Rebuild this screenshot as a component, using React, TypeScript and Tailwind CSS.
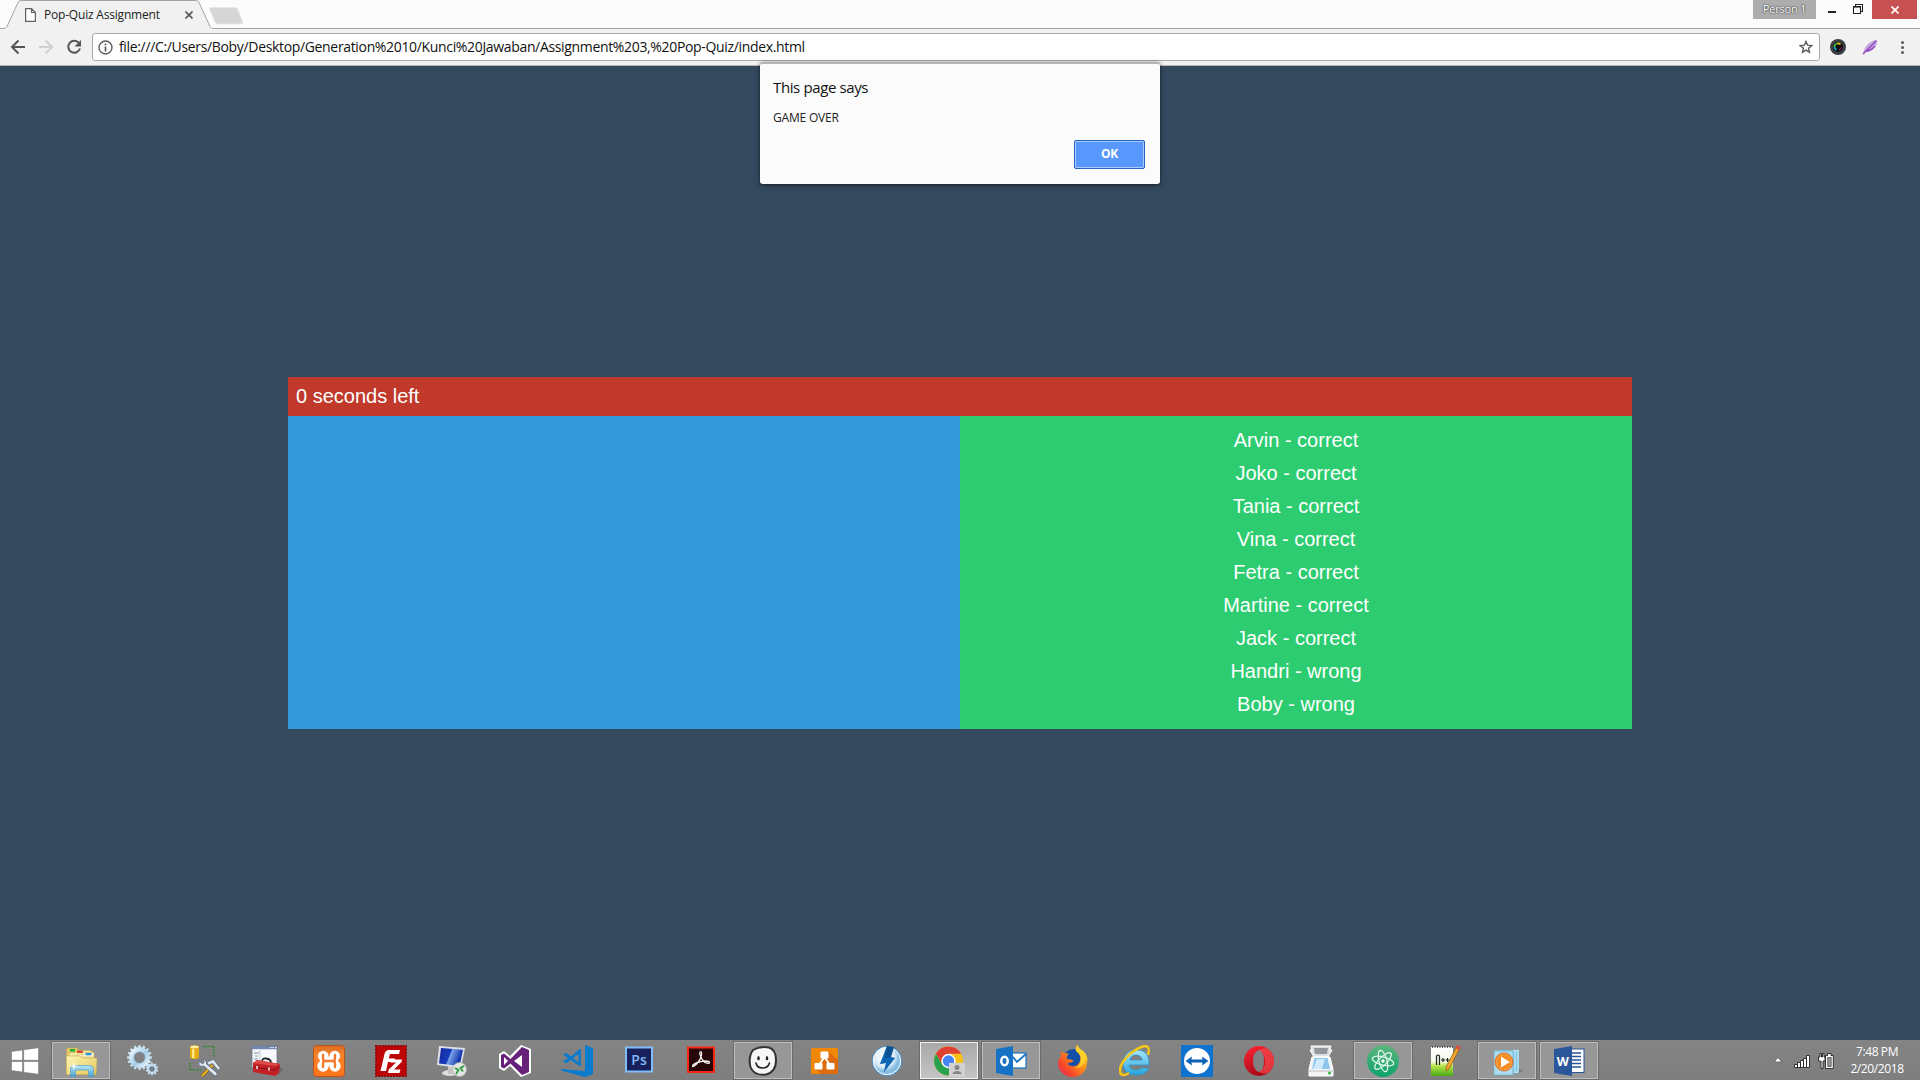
import React from "react";

type IconProps = { children: React.ReactNode };

const Icon = ({ children }: IconProps) => (
  <svg width="32" height="32" viewBox="0 0 32 32" className="shrink-0">
    {children}
  </svg>
);

const gearTeeth = (cx: number, cy: number, r: number, n: number, w: number, h: number, fill: string) =>
  Array.from({ length: n }, (_, i) => (
    <rect
      key={i}
      x={cx - w / 2}
      y={cy - r - h}
      width={w}
      height={h + 2}
      fill={fill}
      transform={`rotate(${(360 / n) * i} ${cx} ${cy})`}
    />
  ));

const Explorer = () => (
  <Icon>
    <defs>
      <linearGradient id="folder" x1="0" y1="0" x2="1" y2="1">
        <stop offset="0" stopColor="#fdf6b8" />
        <stop offset="1" stopColor="#e5c755" />
      </linearGradient>
      <linearGradient id="stand" x1="0" y1="0" x2="0" y2="1">
        <stop offset="0" stopColor="#b9e6f7" />
        <stop offset="1" stopColor="#4ba3d4" />
      </linearGradient>
    </defs>
    <path d="M1.500 29V5Q1.500 3 3.500 3H12L14 6H27V29Z" fill="#e6cb68" stroke="#c6a94c" strokeWidth=".6" />
    <rect x="5" y="4" width="5" height="2.500" fill="#18b43c" />
    <path d="M4 9V7.500H11L13 5.500H25L29 8V14H4Z" fill="#f5e9a3" stroke="#c6a94c" strokeWidth=".6" />
    <rect x="12" y="5.500" width="6" height="2.500" fill="#d94a28" />
    <path d="M12 10H18L20 7.500H29V12H12Z" fill="#fff7cf" stroke="#c6a94c" strokeWidth=".5" />
    <rect x="20.500" y="8" width="6" height="2.300" fill="#2f8fe0" />
    <path d="M1.500 11H15L17 13H32L31 29.500H1.500Z" fill="url(#folder)" stroke="#cdb04d" strokeWidth=".6" />
    <path d="M5.500 31.500V24Q5.500 20.500 9 20.500H25Q28.500 20.500 28.500 24V31.500H23.500V26Q23.500 25 22.500 25H11.500Q10.500 25 10.500 26V31.500Z" fill="url(#stand)" stroke="#4d9fc4" strokeWidth=".7" />
    <path d="M9 16L9.700 20.300L14 21L9.700 21.700L9 26L8.300 21.700L4 21L8.300 20.300Z" fill="#fff" />
  </Icon>
);

const Gears = () => (
  <Icon>
    <defs>
      <linearGradient id="gear" x1="0" y1="0" x2="1" y2="1">
        <stop offset="0" stopColor="#e9f6fe" />
        <stop offset=".55" stopColor="#a6cfe9" />
        <stop offset="1" stopColor="#e2f1fa" />
      </linearGradient>
    </defs>
    {gearTeeth(12.5, 12.5, 10, 16, 2.4, 2.4, "#c8e2f2")}
    <circle cx="12.500" cy="12.500" r="8" fill="none" stroke="url(#gear)" strokeWidth="5" />
    <circle cx="12.500" cy="12.500" r="5.500" fill="none" stroke="#6f9bb8" strokeWidth=".6" />
    {gearTeeth(25, 24, 4.6, 10, 1.8, 1.7, "#c8e2f2")}
    <circle cx="25" cy="24" r="3.700" fill="none" stroke="#c3dfef" strokeWidth="2.500" />
    <circle cx="25" cy="24" r="2.400" fill="none" stroke="#51758f" strokeWidth=".7" />
  </Icon>
);

const DbTools = () => (
  <Icon>
    <path d="M14 1.500H25V12M1 18V25H12" fill="none" stroke="#1d8a20" strokeWidth="1.400" strokeDasharray="1.400 1.400" />
    <path d="M1 2V12Q1 14 5.500 14Q10 14 10 12V2Z" fill="#e6ab15" />
    <path d="M3 3V13H5.500V3Z" fill="#ffe783" />
    <ellipse cx="5.500" cy="2" rx="4.500" ry="1.800" fill="#fff0a1" stroke="#c58a0b" strokeWidth=".5" />
    <path d="M13 31L23.500 20" stroke="#6b4b00" strokeWidth="3.200" />
    <path d="M13 31L23.500 20" stroke="#f0b323" strokeWidth="2.200" />
    <path d="M19 18.500L24 16.500L30 24" stroke="#5f6f7f" strokeWidth="4" fill="none" />
    <path d="M19 18.500L24 16.500L30 24" stroke="#d9e5ef" strokeWidth="2.700" fill="none" />
    <path d="M10 16Q9 20 12 21.500L15 21L26 31Q29 31 28 28L17.500 19Q18 15 14 14L15.500 17L13.500 19Z" fill="#e3ecf4" stroke="#53677b" strokeWidth=".8" />
  </Icon>
);

const Toolbox = () => (
  <Icon>
    <rect x="1" y="1" width="25" height="22" fill="#f6f8fb" stroke="#697994" strokeWidth=".8" />
    <rect x="1" y="1" width="25" height="3.200" fill="#7186ad" />
    <path d="M19 2.600h1.500M21.500 2.600h1.500M24 2.600h1.500" stroke="#fff" strokeWidth="1" />
    <path d="M3 8h5M4 11h3M3 14h4" stroke="#8292a8" strokeWidth="1" />
    <path d="M9 5V15" stroke="#bac5d3" />
    <path d="M24 18L32 24L29 29L24 30Z" fill="#555" opacity=".4" />
    <path d="M11 17Q11 13 15 13.500Q20 14 20 18" fill="none" stroke="#222" strokeWidth="1.800" />
    <path d="M2 18L6 15L29 19L28 28L24 31L2 27Z" fill="#c32125" />
    <path d="M2 18L6 15L29 19L24 21Z" fill="#dd4a4a" />
    <path d="M2 22L24 25L28.500 22" fill="none" stroke="#7f0d12" />
    <path d="M6 21V24M18 22.500V25.500" stroke="#eee" strokeWidth="1.500" />
  </Icon>
);

const Xampp = () => (
  <Icon>
    <defs>
      <linearGradient id="xampp" x1="0" y1="0" x2="0" y2="1">
        <stop stopColor="#d96b24" />
        <stop offset=".3" stopColor="#f6842d" />
        <stop offset="1" stopColor="#ff721a" />
      </linearGradient>
    </defs>
    <rect x=".5" y=".5" width="31" height="31" rx="3" fill="url(#xampp)" stroke="#b9541a" />
    <g fill="#fff">
      <circle cx="10.200" cy="11" r="5.300" />
      <circle cx="21.800" cy="11" r="5.300" />
      <circle cx="10" cy="21" r="5.700" />
      <circle cx="22" cy="21" r="5.700" />
      <rect x="7" y="11.500" width="18" height="9.500" />
    </g>
    <path d="M10 10V13.500Q10 16 12.500 16H19.500Q22 16 22 13.500V10M10 22V18.500Q10 16 12.500 16M22 22V18.500Q22 16 19.500 16" fill="none" stroke="#f5792a" strokeWidth="2.400" strokeLinecap="round" />
  </Icon>
);

const FileZilla = () => (
  <Icon>
    <rect x=".8" y=".8" width="30.400" height="30.400" fill="#bd0606" stroke="#8e0505" strokeWidth="1.500" strokeDasharray="2 1" />
    <path d="M5.500 26L9.500 9Q10.500 5 14 5H25L24 9H15L13.800 13.500H20L19.500 17H13L11 26Z" fill="#fff" />
    <path d="M16 14.500H27L26.500 17L19 24.500H25.500L24.500 28H13L13.700 24.500L21 17.500H15.500Z" fill="#fff" />
  </Icon>
);

const RemoteDesktop = () => (
  <Icon>
    <defs>
      <linearGradient id="screen" x1="0" y1="0" x2="1" y2=".3">
        <stop stopColor="#17269d" />
        <stop offset=".5" stopColor="#163cbb" />
        <stop offset=".55" stopColor="#7ba3ea" />
        <stop offset="1" stopColor="#082aa8" />
      </linearGradient>
    </defs>
    <ellipse cx="13" cy="28" rx="8" ry="3" fill="#dedede" />
    <path d="M11 21H18L20 29H11Z" fill="#c4c4c4" />
    <path d="M2 1L28 3L24 23L0 20Z" fill="#dce2e8" />
    <path d="M4 3L26 4.800L22.500 21L2 18.500Z" fill="url(#screen)" />
    <circle cx="22.500" cy="24.500" r="7" fill="#e3e6e3" stroke="#a9aea9" strokeWidth=".8" />
    <path d="M18 23L21.500 25L19 29M27 21L23.500 23L26 26.500" fill="none" stroke="#309a3c" strokeWidth="1.800" />
  </Icon>
);

const VisualStudio = () => (
  <Icon>
    <path d="M0 9L5 6L11 11L22 0L32 4V28L22 32L11 21L5 26L0 23Z" fill="#fff" />
    <path d="M2 10L5 8.500L11.500 14L23 2L30 5V27L23 30L11.500 18.500L5 23.500L2 22Z" fill="#68217a" />
    <path d="M5 12L9 16L5 20ZM15 16L23 10V22Z" fill="#fff" />
  </Icon>
);

const VsCode = () => (
  <Icon>
    <path d="M24 0L32 3V29L24 32L0 25.500V24L24 26Z" fill="#0b7ccd" />
    <path d="M2 9.500L5.500 8L10 11.500L18.500 4H20V21H18.500L9.500 15L5.500 18.500L2 16.500L5.500 13Z" fill="#0b7ccd" />
    <path d="M4.500 10.800V15.200L6.800 13ZM12 13.200L17.500 9V17.200Z" fill="#828282" />
  </Icon>
);

const Photoshop = () => (
  <Icon>
    <rect x="2" y="1.500" width="28" height="26" fill="#80bdfb" />
    <rect x="4" y="3.500" width="24" height="22" fill="#18205b" />
    <text x="16" y="19.500" textAnchor="middle" fontSize="14" fontWeight="600" fill="#7fb8f4" fontFamily="Open Sans">Ps</text>
  </Icon>
);

const Acrobat = () => (
  <Icon>
    <rect x="2" y="1.500" width="28" height="26.500" fill="#fb2610" />
    <rect x="4" y="3.500" width="24" height="22.500" fill="#270707" />
    <path d="M15 7Q17 6 16.500 10Q15 17 8.500 21.500Q7 22 8 20Q11 17 20 16Q25 16 24.500 17.800Q21 19.500 17.500 15Q14 9 15 7Z" fill="none" stroke="#f4eeee" strokeWidth="1.300" />
  </Icon>
);

const Balsamiq = () => (
  <Icon>
    <path d="M6 5Q13 1 22 2.500Q29 5 29 15Q29 27 19 29.500Q7 31 3.500 22Q1 12 6 5Z" fill="#f7f7f7" stroke="#333" strokeWidth="2" />
    <path d="M11.500 12.500V14M20 12.500V14" stroke="#222" strokeWidth="2.400" strokeLinecap="round" />
    <path d="M9 18Q10 23 15.500 23Q21 23 22.500 18" fill="none" stroke="#222" strokeWidth="1.600" strokeLinecap="round" />
  </Icon>
);

const DrawIo = () => (
  <Icon>
    <rect x="2" y="3" width="27" height="26" rx="1.500" fill="#f08705" />
    <path d="M19 6L29 15V29H12L6 24Z" fill="#df6c0c" />
    <path d="M15.500 12L10 20M15.500 12L21 20" stroke="#fff" strokeWidth="2" />
    <rect x="11.500" y="6.500" width="8" height="7" rx="1" fill="#fff" />
    <rect x="5.500" y="18" width="8" height="6.500" rx="1" fill="#fff" />
    <rect x="17.500" y="18" width="8" height="6.500" rx="1" fill="#fff" />
  </Icon>
);

const Daemon = () => (
  <Icon>
    <defs>
      <radialGradient id="daemon" cx=".4" cy=".35">
        <stop stopColor="#fff" />
        <stop offset=".7" stopColor="#dcecf7" />
        <stop offset="1" stopColor="#86bce2" />
      </radialGradient>
    </defs>
    <circle cx="16" cy="16" r="14.700" fill="url(#daemon)" stroke="#3d86c2" strokeWidth="1" />
    <circle cx="16" cy="16" r="13.700" fill="none" stroke="#fff" strokeWidth="1" />
    <path d="M16 1L23 2L20 12L24 13L13 27L15 18L9 19Z" fill="#0b4f93" />
    <path d="M16 1L14 13L20 12L24 13L13 27L15 18L9 19Z" fill="#1285da" opacity=".45" />
  </Icon>
);

const Chrome = () => (
  <Icon>
    <circle cx="15.500" cy="16" r="14.500" fill="#fbc116" />
    <path d="M2.900 8.800A14.500 14.500 0 0 1 28.100 8.800L15.500 8.800L9.300 19.600Z" fill="#e04132" />
    <path d="M2.900 8.800A14.500 14.500 0 0 0 15.500 30.500L21.700 19.600L9.300 19.600Z" fill="#2aa14f" />
    <circle cx="15.500" cy="16" r="7.200" fill="#fff" />
    <circle cx="15.500" cy="16" r="5.700" fill="#4485f4" />
    <rect x="16" y="18" width="16" height="14" fill="#d0d0d0" />
    <circle cx="24" cy="22.500" r="2.500" fill="#868686" />
    <path d="M19.500 29Q20 26 24 26Q28 26 28.500 29Z" fill="#868686" />
  </Icon>
);

const Outlook = () => (
  <Icon>
    <rect x="16" y="8" width="15" height="15" fill="#fff" stroke="#1672c5" strokeWidth="1.200" />
    <path d="M18 12L22 17L31 9" fill="none" stroke="#1672c5" strokeWidth="1.800" />
    <path d="M1 4L18 1V31L1 28Z" fill="#1672c5" />
    <ellipse cx="9.500" cy="16" rx="3.200" ry="4.300" fill="none" stroke="#fff" strokeWidth="2.500" />
  </Icon>
);

const Firefox = () => (
  <Icon>
    <defs>
      <linearGradient id="fox" x1="1" y1="0" x2="0" y2="1">
        <stop stopColor="#ffef32" />
        <stop offset=".4" stopColor="#ff9818" />
        <stop offset=".75" stopColor="#f4422d" />
        <stop offset="1" stopColor="#e72870" />
      </linearGradient>
    </defs>
    <circle cx="17" cy="15" r="11" fill="#1550a8" />
    <path d="M4 6Q3 8 4 11Q1 14 1 18A14.500 14 0 0 0 30 18Q32 11 26 6Q22 4 20 0Q18 3 19 6Q25 10 23 16Q21 22 15 21Q11 21 11 18Q14 18 17 16Q14 14 10 14Q9 11 12 9Q9 8 7 8Q5 8 4 6Z" fill="url(#fox)" />
    <path d="M20 0Q18 3 19 6Q24 9 24 15Q23 22 17 23Q26 24 29 14Q29 8 26 6Q22 4 20 0Z" fill="#ffd62b" opacity=".85" />
  </Icon>
);

const InternetExplorer = () => (
  <Icon>
    <defs>
      <linearGradient id="ie" x1="0" y1="0" x2="0" y2="1">
        <stop stopColor="#a5e7fc" />
        <stop offset="1" stopColor="#26a4de" />
      </linearGradient>
    </defs>
    <path d="M10 20H30Q31 5 18 5Q5 5 4 18Q4 30 18 30Q27 30 30 23H22Q20 25 17 25Q11 25 10 20ZM11 15Q12 10 17 10Q22 10 23 15Z" fill="url(#ie)" stroke="#268fc6" strokeWidth=".7" fillRule="evenodd" />
    <path d="M29 10Q31 3 28 1.500Q23-.5 11 9Q-1 20 1.500 28Q3 32 10 28" fill="none" stroke="#f3c51b" strokeWidth="2.500" />
  </Icon>
);

const TeamViewer = () => (
  <Icon>
    <rect width="32" height="32" fill="#0d73cf" />
    <circle cx="16" cy="16" r="13" fill="#fff" />
    <path d="M4.500 16L11 11.500L10.500 14.500H21.500L21 11.500L27.500 16L21 20.500L21.500 17.500H10.500L11 20.500Z" fill="#0d63b5" />
  </Icon>
);

const Opera = () => (
  <Icon>
    <defs>
      <linearGradient id="opera" x1="0" y1="0" x2=".4" y2="1">
        <stop stopColor="#ff2634" />
        <stop offset="1" stopColor="#aa0816" />
      </linearGradient>
    </defs>
    <path d="M16 1A15 15 0 1 0 16 31A15 15 0 1 0 16 1ZM16 5Q21 6 21 16Q21 26 16 27Q10 25 10 16Q10 7 16 5Z" fill="url(#opera)" fillRule="evenodd" />
    <path d="M16 5Q21 2 25 4Q31 9 31 16Q31 23 25 28Q21 30 16 27Q22 24 22 16Q22 8 16 5Z" fill="#fb4e52" opacity=".65" />
  </Icon>
);

const Scanner = () => (
  <Icon>
    <path d="M6 1H26L25 5H27L23 12H9L5 5H7Z" fill="#dde0e3" stroke="#fff" />
    <path d="M9 3H23L22 9H10Z" fill="#90969c" />
    <path d="M7 12H25L28 24V31H4V24Z" fill="#f2f4f5" stroke="#fff" />
    <path d="M9.500 13H22.500L25 24H7Z" fill="#8cc6ef" />
    <path d="M12 14H20L17 24H8Z" fill="#cfe9fa" />
    <path d="M4 26H28" stroke="#b9c0c6" />
    <circle cx="24.500" cy="28" r="1.500" fill="#39b44a" />
  </Icon>
);

const Atom = () => (
  <Icon>
    <defs>
      <linearGradient id="atom" x1="0" y1="0" x2="0" y2="1">
        <stop stopColor="#5fb57d" />
        <stop offset="1" stopColor="#0ba36c" />
      </linearGradient>
    </defs>
    <circle cx="16" cy="16" r="16" fill="url(#atom)" />
    <g fill="none" stroke="#e5f9ee" strokeWidth="1.200">
      <ellipse cx="16" cy="16" rx="11" ry="4" transform="rotate(15 16 16)" />
      <ellipse cx="16" cy="16" rx="11" ry="4" transform="rotate(75 16 16)" />
      <ellipse cx="16" cy="16" rx="11" ry="4" transform="rotate(135 16 16)" />
    </g>
    <circle cx="16" cy="16" r="1.700" fill="#fff" />
  </Icon>
);

const Notepad = () => (
  <Icon>
    <defs>
      <linearGradient id="note" x1="0" y1="0" x2="0" y2="1">
        <stop stopColor="#fff" />
        <stop offset=".5" stopColor="#f4fbe9" />
        <stop offset=".65" stopColor="#b5e64a" />
        <stop offset="1" stopColor="#4ba814" />
      </linearGradient>
    </defs>
    <rect x="2" y="2" width="22" height="29" fill="url(#note)" />
    <path d="M3 2H24" stroke="#555" strokeWidth="2" strokeDasharray="1 1.500" />
    <path d="M7.500 20V11Q7.500 10 9 10Q10.500 10 10.500 11V20M12 15H16M14 13V17M16.500 15H20.500M18.500 13V17" fill="none" stroke="#222" strokeWidth="1.200" />
    <path d="M28 1L31 3L20 24L17 26L17 22Z" fill="#efa42c" stroke="#875617" strokeWidth=".7" />
    <path d="M28 0L31.500 2L30 5L26.500 3Z" fill="#dd4e45" />
  </Icon>
);

const MediaPlayer = () => (
  <Icon>
    <path d="M24 29L32 26L28 24Z" fill="#555" opacity=".5" />
    <path d="M4 5H28V28L4 30Z" fill="#7fc6e4" />
    <path d="M25 6L27 5V27L25 28M22 6L24 5V28" fill="none" stroke="#d3f0fa" strokeWidth="1" />
    <rect x="3" y="6" width="19" height="24" fill="#abdcf0" stroke="#67aac7" strokeWidth=".6" />
    <circle cx="13" cy="17" r="9" fill="#f68a1d" stroke="#dd6514" strokeWidth=".8" />
    <circle cx="13" cy="17" r="7.500" fill="none" stroke="#f9b36d" strokeWidth=".7" />
    <path d="M10 11.500V22.500L19 17Z" fill="#fff" />
  </Icon>
);

const Word = () => (
  <Icon>
    <rect x="16" y="4" width="15" height="23.500" fill="#fff" stroke="#2a569a" strokeWidth="1" />
    <path d="M18 8H28M18 11.500H28M18 15H28M18 18.500H28M18 22H28" stroke="#2a569a" strokeWidth="1.500" />
    <path d="M1 4L19 1V31L1 28Z" fill="#2a569a" />
    <text x="9.700" y="20.500" textAnchor="middle" fontSize="12.500" fontWeight="700" fill="#fff" fontFamily="Open Sans">W</text>
  </Icon>
);

const apps: { name: string; icon: React.FC; state?: "open" | "active" }[] = [
  { name: "Explorer", icon: Explorer, state: "open" },
  { name: "Services", icon: Gears },
  { name: "Database tools", icon: DbTools },
  { name: "Toolbox", icon: Toolbox },
  { name: "XAMPP", icon: Xampp },
  { name: "FileZilla", icon: FileZilla },
  { name: "Remote Desktop", icon: RemoteDesktop },
  { name: "Visual Studio", icon: VisualStudio },
  { name: "VS Code", icon: VsCode },
  { name: "Photoshop", icon: Photoshop },
  { name: "Acrobat", icon: Acrobat },
  { name: "Balsamiq", icon: Balsamiq, state: "open" },
  { name: "draw.io", icon: DrawIo },
  { name: "Daemon Tools", icon: Daemon },
  { name: "Chrome", icon: Chrome, state: "active" },
  { name: "Outlook", icon: Outlook, state: "open" },
  { name: "Firefox", icon: Firefox },
  { name: "Internet Explorer", icon: InternetExplorer },
  { name: "TeamViewer", icon: TeamViewer },
  { name: "Opera", icon: Opera },
  { name: "Scanner", icon: Scanner },
  { name: "Atom", icon: Atom, state: "open" },
  { name: "Notepad++", icon: Notepad },
  { name: "Media Player", icon: MediaPlayer, state: "open" },
  { name: "Word", icon: Word, state: "open" },
];

const slotStyle = {
  none: "border-transparent",
  open: "border-[#bdbdbd] bg-[#979797] outline outline-1 outline-[#6b6b6b]",
  active: "border-[#f4f4f4] bg-gradient-to-b from-[#a9a9a9] to-[#c4c4c4] outline outline-1 outline-[#6b6b6b]",
};

const Taskbar = () => (
  <footer className="flex h-10 bg-gradient-to-b from-[#848484] to-[#7e7e7e]">
    <div className="flex w-[50px] items-center justify-center pt-px">
      <svg width="28" height="28" viewBox="0 0 28 28" fill="#fff" stroke="#6d6d6d" strokeWidth=".5">
        <path d="M.5 4.500L11.500 3V13.300H.5ZM12.700 2.800L27.500.7V13.300H12.700ZM.5 14.500H11.500V25L.5 23.500ZM12.700 14.500H27.500V27.300L12.700 25.200Z" />
      </svg>
    </div>
    {apps.map(({ name, icon: AppIcon, state }) => (
      <div key={name} className="flex w-[62px] justify-center pt-[2px] pb-px">
        <div className={`flex h-[37px] w-[58px] items-center justify-center border ${slotStyle[state ?? "none"]}`}>
          <AppIcon />
        </div>
      </div>
    ))}
    <div className="ml-auto flex items-center">
      <svg width="60" height="20" viewBox="0 0 60 20" className="mr-[16px]">
        <path d="M0 12L4 7.500L8 12Z" fill="#fff" stroke="#555" strokeWidth=".8" />
        <g fill="#fff" stroke="#222" strokeWidth=".9">
          <path d="M20.500 14.500h3v3h-3ZM23.500 12.500h3v5h-3ZM26.500 10.500h3v7h-3ZM29.500 8.500h3v9h-3ZM32.500 5.500h3v12h-3Z" />
          <path d="M46 3.500V7H44.500V11H47V18.500H49V11H51V7H50V3.500H48.500V7H47.500V3.500Z" />
          <path d="M53.500 3.500H57V5.500H59.300V18.500H51.500V5.500H53.500Z" />
        </g>
        <path d="M53.700 7.500h3.500v9h-3.500Z" fill="#999" stroke="#222" strokeWidth=".6" />
      </svg>
      <div className="mr-4 w-[54px] text-center text-[12px] leading-[17px] tracking-[-0.4px] whitespace-nowrap text-white">
        <div>7:48 PM</div>
        <div>2/20/2018</div>
      </div>
    </div>
  </footer>
);

const TabStrip = () => (
  <div className="relative flex h-[29px] bg-[#fcfcfc]">
    <svg width="1920" height="29" viewBox="0 0 1920 29" className="absolute inset-0">
      <path d="M0 28.500H4Q6 28.500 7 26.500L18 2.500Q19 .5 21 .5H196Q198 .5 199 2.500L210 26.500Q211 28.500 213 28.500H1920V30H0Z" fill="#f1f1f1" stroke="#a3a3a3" />
      <path d="M5 29H212" stroke="#f1f1f1" strokeWidth="1.500" />
      <path d="M211 7.500H235Q237 7.500 238 9.500L242.500 22Q243 24 241 24H218Q216 24 215 22L209.500 9Q209 7.500 211 7.500Z" fill="#d6d6d6" stroke="#e6e6e6" strokeWidth=".8" />
    </svg>
    <div className="relative flex h-[29px] w-[211px] items-center pl-[25px]">
      <svg width="11" height="14" viewBox="0 0 11 14" fill="#fff" stroke="#606060" className="shrink-0">
        <path d="M.6.6H6.500L10.400 4.500V13.400H.6ZM6.500.6V4.500H10.400" strokeWidth="1.200" />
      </svg>
      <span className="ml-2 text-[12px] tracking-[-0.2px] whitespace-nowrap text-[#222]">Pop-Quiz Assignment</span>
      <svg width="8" height="8" viewBox="0 0 8 8" className="absolute top-[11px] left-[185px]">
        <path d="M.5.5L7.500 7.500M7.500.5L.5 7.500" stroke="#5a5a5a" strokeWidth="1.700" />
      </svg>
    </div>
    <div className="relative ml-auto flex h-[19px] pr-[3px]">
      <div className="flex w-[63px] items-center justify-center bg-[#adadad] text-[11px] tracking-[-0.2px] whitespace-nowrap text-white [text-shadow:0_0_2px_#333,0_0_1px_#333]">
        Person 1
      </div>
      <svg width="56" height="19" viewBox="0 0 56 19">
        <path d="M12 12H20" stroke="#222" strokeWidth="2" />
        <path d="M39.500 6.500V4.500H46.500V11.500H44.500M37.500 6.500H44.500V13.500H37.500Z" fill="none" stroke="#222" strokeWidth="1.100" />
        <path d="M37 6.800H45" stroke="#222" strokeWidth="1.600" />
      </svg>
      <div className="flex w-[45px] items-center justify-center bg-[#c75050]">
        <svg width="8" height="8" viewBox="0 0 8 8" className="mt-px">
          <path d="M.5.5L7.500 7.500M7.500.5L.5 7.500" stroke="#fff" strokeWidth="1.600" />
        </svg>
      </div>
    </div>
  </div>
);

const Toolbar = () => (
  <div className="flex h-[37px] items-start border-b border-[#b5b5b5] bg-[#f1f1f1] pt-1">
    <svg width="92" height="28" viewBox="0 0 92 28" fill="none" strokeWidth="2">
      <path d="M25 14H12.500M18.500 7.500L12 14L18.500 20.500" stroke="#555" />
      <path d="M39 14H51.500M45.500 7.500L52 14L45.500 20.500" stroke="#d0d0d0" />
      <path d="M79 10A6 6 0 1 0 80 15.500" stroke="#555" />
      <path d="M81 7V13.500H74.500Z" fill="#555" />
    </svg>
    <div className="flex h-7 w-[1728px] items-center rounded-[3px] border border-[#a9a9a9] bg-white pl-[5px]">
      <svg width="15" height="15" viewBox="0 0 15 15" fill="none" stroke="#5a5a5a" className="shrink-0">
        <circle cx="7.500" cy="7.500" r="6.500" strokeWidth="1.400" />
        <path d="M7.500 3.500V5.200M7.500 6.500V11.500" strokeWidth="1.700" />
      </svg>
      <span className="relative -top-px ml-[6px] text-[14px] tracking-[-0.34px] whitespace-nowrap text-[#111]">
        file:///C:/Users/Boby/Desktop/Generation%2010/Kunci%20Jawaban/Assignment%203,%20Pop-Quiz/index.html
      </span>
      <svg width="14" height="14" viewBox="0 0 14 14" fill="none" stroke="#5a5a5a" className="mr-[6px] ml-auto">
        <path d="M7 1.500L8.600 5.200L12.700 5.600L9.600 8.200L10.500 12.200L7 10.100L3.500 12.200L4.400 8.200L1.300 5.600L5.400 5.200Z" strokeWidth="1.400" />
      </svg>
    </div>
    <svg width="100" height="28" viewBox="0 0 100 28">
      <circle cx="18" cy="14" r="8" fill="#3c3f46" />
      <circle cx="18" cy="14" r="5" fill="#0a0a0a" />
      <g fill="none" strokeWidth="1.800">
        <path d="M14.500 14A3.500 3.500 0 0 1 17 10.500" stroke="#45b92f" />
        <path d="M17 10.500A3.500 3.500 0 0 1 20.500 11.500" stroke="#e4c41c" />
        <path d="M14.500 14A3.500 3.500 0 0 0 16.500 17" stroke="#14b5e0" />
        <path d="M21.500 14A3.500 3.500 0 0 1 19 17.200" stroke="#8b2268" strokeWidth="1.200" />
      </g>
      <path d="M43 21Q44 14 49 10Q53 7 57 6.500Q58 11 54 15Q50 19 46 19Z" fill="#c9a8e2" />
      <path d="M43 21L56 8M46 18Q51 18 55 13" fill="none" stroke="#8d45b9" strokeWidth="1.400" />
      <path d="M82.500 9.500h.01M82.500 14.500h.01M82.500 19.500h.01" stroke="#5a5a5a" strokeWidth="3" strokeLinecap="round" />
    </svg>
  </div>
);

const results = [
  "Arvin - correct",
  "Joko - correct",
  "Tania - correct",
  "Vina - correct",
  "Fetra - correct",
  "Martine - correct",
  "Jack - correct",
  "Handri - wrong",
  "Boby - wrong",
];

const Quiz = () => (
  <section className="mx-auto w-[1344px] font-['Liberation_Sans',sans-serif] text-[20px] text-white">
    <div className="h-[39px] bg-[#c0392b] px-2 py-2 leading-[23px]">0 seconds left</div>
    <div className="grid grid-cols-2">
      <div className="bg-[#3498db]" />
      <ul className="bg-[#2ecc71] py-2 text-center leading-[33px]">
        {results.map((result) => (
          <li key={result}>{result}</li>
        ))}
      </ul>
    </div>
  </section>
);

const AlertDialog = () => (
  <div className="absolute top-[62px] left-[760px] flex h-[122px] w-[400px] flex-col rounded-[3px] border-t-2 border-[#b5b5b5] bg-[#fbfbfb] px-[13px] pt-[12px] shadow-[0_1px_4px_rgba(0,0,0,0.6)]">
    <h1 className="text-[15px] leading-[22px] tracking-[-0.38px] whitespace-nowrap text-[#111]">This page says</h1>
    <p className="mt-[12px] text-[12px] leading-4 tracking-[-0.2px] whitespace-nowrap text-[#222]">GAME OVER</p>
    <button className="mt-[14px] mr-[2px] h-[29px] w-[71px] self-end rounded-[2px] border border-[#2562c6] bg-[#5897fb] pb-[2px] text-[12px] font-bold tracking-[-0.3px] text-white shadow-[inset_0_0_0_1px_#a9cbff]">
      OK
    </button>
  </div>
);

export default function App() {
  return (
    <div className="relative flex h-[1080px] w-[1920px] flex-col overflow-hidden bg-[#34495e] font-['Open_Sans',sans-serif]">
      <TabStrip />
      <Toolbar />
      <main className="flex-1 pt-[311px]">
        <Quiz />
      </main>
      <Taskbar />
      <AlertDialog />
    </div>
  );
}
